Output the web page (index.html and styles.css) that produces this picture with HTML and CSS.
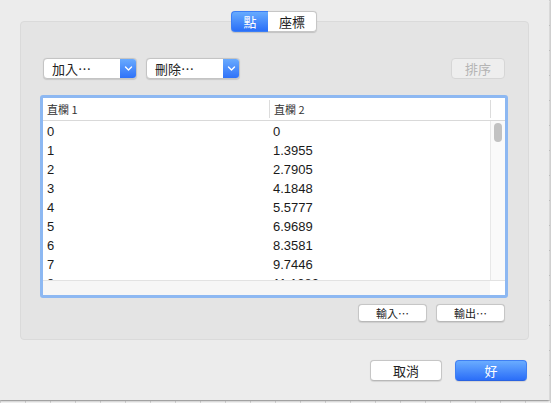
FILE: index.html
```html
<!DOCTYPE html>
<html lang="zh-Hant">
<head>
<meta charset="utf-8">
<title>點</title>
<link rel="stylesheet" href="styles.css">
</head>
<body>
<div class="window">
  <div class="seg">
    <span class="seg-item on">點</span>
    <span class="seg-item off">座標</span>
  </div>
  <div class="group">
    <div class="toolbar">
      <div class="popup">
        <span class="popup-label">加入⋯</span>
        <span class="popup-arrow"><svg width="9" height="9" viewBox="0 0 9 9"><path d="M1.5 3 L4.5 6 L7.5 3" fill="none" stroke="#fff" stroke-width="1.4" stroke-linecap="round" stroke-linejoin="round"/></svg></span>
      </div>
      <div class="popup">
        <span class="popup-label">刪除⋯</span>
        <span class="popup-arrow"><svg width="9" height="9" viewBox="0 0 9 9"><path d="M1.5 3 L4.5 6 L7.5 3" fill="none" stroke="#fff" stroke-width="1.4" stroke-linecap="round" stroke-linejoin="round"/></svg></span>
      </div>
      <span class="spacer"></span>
      <span class="btn btn-disabled">排序</span>
    </div>
    <div class="ring">
      <div class="table">
        <div class="thead">
          <div class="th c1">直欄 1</div>
          <div class="th c2">直欄 2</div>
          <div class="th sbh"></div>
        </div>
        <div class="tbody">
          <div class="rows">
            <div class="row"><span class="c1">0</span><span class="c2">0</span></div>
            <div class="row"><span class="c1">1</span><span class="c2">1.3955</span></div>
            <div class="row"><span class="c1">2</span><span class="c2">2.7905</span></div>
            <div class="row"><span class="c1">3</span><span class="c2">4.1848</span></div>
            <div class="row"><span class="c1">4</span><span class="c2">5.5777</span></div>
            <div class="row"><span class="c1">5</span><span class="c2">6.9689</span></div>
            <div class="row"><span class="c1">6</span><span class="c2">8.3581</span></div>
            <div class="row"><span class="c1">7</span><span class="c2">9.7446</span></div>
            <div class="row"><span class="c1">8</span><span class="c2">11.1282</span></div>
          </div>
          <div class="vscroll"><div class="thumb"></div></div>
        </div>
        <div class="hscroll">
          <div class="htrack"></div>
          <div class="corner"></div>
        </div>
      </div>
    </div>
    <div class="io">
      <span class="btn btn-small">輸入⋯</span>
      <span class="btn btn-small">輸出⋯</span>
    </div>
  </div>
  <div class="footer">
    <span class="btn btn-large">取消</span>
    <span class="btn btn-large btn-primary">好</span>
  </div>
</div>
</body>
</html>
```
FILE: styles.css
```css
* { box-sizing: border-box; }
html, body { margin: 0; padding: 0; }
body {
  width: 551px;
  height: 403px;
  overflow: hidden;
  background-color: #f4f4f4;
  background-image:
    linear-gradient(to right, #d4d4d4 1px, transparent 1px),
    linear-gradient(to bottom, #d4d4d4 1px, transparent 1px);
  background-size: 25px 25px;
  font-family: "Liberation Sans", "Noto Sans CJK TC", sans-serif;
  color: #1e1e1e;
}
.window {
  width: 549px;
  height: 400px;
  background: #ececec;
  box-shadow: 0 1px 2px rgba(0,0,0,0.35);
  display: flex;
  flex-direction: column;
  padding-top: 11px;
}
.seg {
  align-self: center;
  margin-left: -1px;
  display: flex;
  height: 21px;
  position: relative;
  z-index: 1;
  border-radius: 4px;
  box-shadow: 0 0.5px 1px rgba(0,0,0,0.15);
  font-family: "Noto Sans CJK TC", sans-serif;
  font-size: 13px;
}
.seg-item {
  display: flex;
  align-items: center;
  justify-content: center;
  height: 21px;
}
.seg-item.on {
  width: 37px;
  color: #fff;
  background: linear-gradient(#67abfe, #2a6ff8);
  border-radius: 4px 0 0 4px;
  border: 1px solid #3c7ef5;
  border-right: none;
}
.seg-item.off {
  width: 49px;
  background: #fff;
  border: 1px solid #c6c6c6;
  border-left: none;
  border-radius: 0 4px 4px 0;
}
.group {
  margin: -11px 20px 0 20px;
  background: #e4e4e4;
  border: 1px solid #dadada;
  border-radius: 4px;
  padding: 36px 20px 17px 19px;
}
.toolbar {
  display: flex;
  height: 21px;
  margin: 0 3px;
  gap: 9px;
}
.popup {
  width: 94px;
  height: 21px;
  display: flex;
  background: #fff;
  border: 1px solid #c4c4c4;
  border-radius: 4px;
  box-shadow: 0 0.5px 1px rgba(0,0,0,0.12);
  overflow: hidden;
}
.popup-label {
  flex: 1;
  display: flex;
  align-items: center;
  padding-left: 8px;
  font-family: "Noto Sans CJK TC", sans-serif;
  font-size: 13px;
  color: #222;
}
.popup-arrow {
  width: 17px;
  display: flex;
  align-items: center;
  justify-content: center;
  background: linear-gradient(#6cadfe, #2c6ff8);
  margin: -1px -1px -1px 0;
}
.spacer { flex: 1; }
.btn {
  display: flex;
  align-items: center;
  justify-content: center;
  background: #fff;
  border: 1px solid #c6c6c6;
  border-bottom-color: #b8b8b8;
  border-radius: 4px;
  box-shadow: 0 0.5px 1px rgba(0,0,0,0.1);
  font-family: "Noto Sans CJK TC", sans-serif;
  font-size: 13px;
  color: #222;
}
.btn-disabled {
  width: 54px;
  height: 21px;
  background: #eeeeee;
  border-color: #d6d6d6;
  box-shadow: none;
  color: #b4b4b4;
}
.ring {
  margin-top: 16px;
  border: 3px solid #8db8f2;
  border-radius: 3px;
  height: 203px;
}
.table {
  background: #fff;
  height: 197px;
  display: flex;
  flex-direction: column;
}
.thead {
  display: flex;
  height: 23px;
  border-bottom: 1px solid #d9d9d9;
  font-family: "Noto Sans CJK TC", sans-serif;
  font-size: 11px;
  color: #333;
}
.th {
  display: flex;
  align-items: center;
  padding-left: 4px;
  padding-bottom: 1px;
}
.th.c1 { width: 226px; }
.th.c2 {
  width: 221px;
  border-left: 1px solid #dcdcdc;
  background-clip: padding-box;
}
.thead .th.c2, .thead .th.sbh {
  border-image: linear-gradient(transparent 3px, #dcdcdc 3px, #dcdcdc 19px, transparent 19px) 1;
}
.th.sbh {
  flex: 1;
  border-left: 1px solid #dcdcdc;
}
.tbody {
  flex: 1;
  display: flex;
  overflow: hidden;
}
.rows {
  flex: 1;
  padding-top: 1px;
  overflow: hidden;
}
.row {
  display: flex;
  height: 19px;
  align-items: center;
  font-size: 13px;
  color: #1a1a1a;
}
.row .c1 { width: 226px; padding-left: 4px; }
.row .c2 { padding-left: 4px; }
.vscroll {
  width: 15px;
  background: #fafafa;
  border-left: 1px solid #e8e8e8;
  padding: 2px 0 0 3px;
}
.thumb {
  width: 8px;
  height: 19px;
  border-radius: 4px;
  background: #c2c2c2;
}
.hscroll {
  display: flex;
  height: 15px;
  border-top: 1px solid #e2e2e2;
}
.htrack { flex: 1; background: #f6f6f6; }
.corner { width: 15px; background: #fff; }
.io {
  display: flex;
  justify-content: flex-end;
  gap: 9px;
  margin: 6px 3px 0 0;
}
.btn-small {
  width: 69px;
  height: 18px;
  font-size: 11px;
}
.footer {
  display: flex;
  justify-content: flex-end;
  gap: 13px;
  margin-top: 20px;
  padding-right: 22px;
}
.btn-large {
  width: 72px;
  height: 21px;
}
.btn-primary {
  background: linear-gradient(#69acff, #2b6ef8);
  border-color: #3f7ff3;
  border-bottom-color: #2a62e0;
  color: #fff;
}
```
